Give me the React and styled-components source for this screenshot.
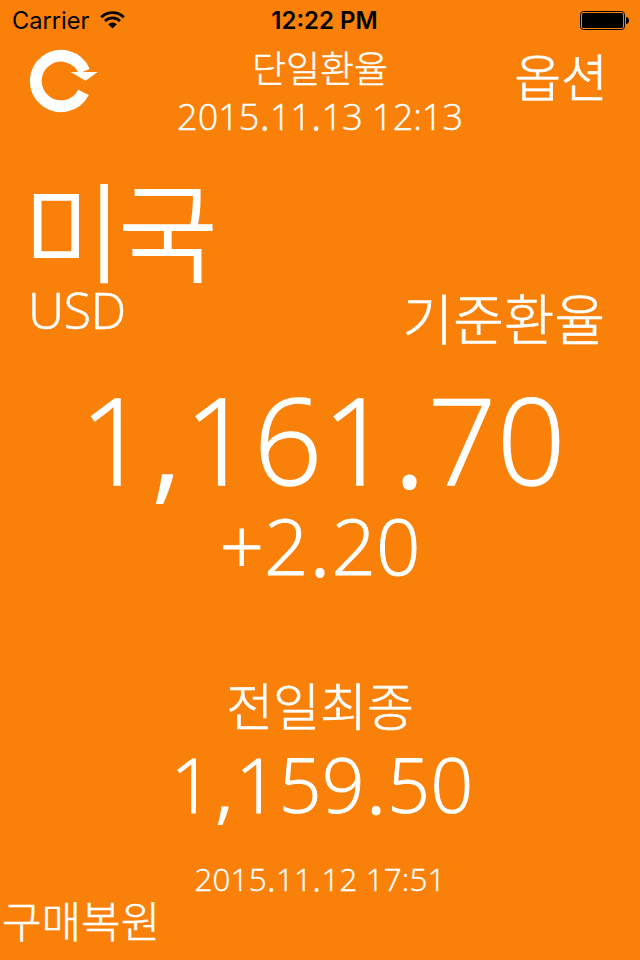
import styled, { createGlobalStyle } from "styled-components";

const GlobalStyle = createGlobalStyle`
  * {
    box-sizing: border-box;
  }
  body {
    margin: 0;
    background: #fa8109;
  }
`;

const Screen = styled.div`
  width: 640px;
  height: 960px;
  overflow: hidden;
  background: #fa8109;
  color: #fff;
  font-family: "Open Sans", "Noto Sans CJK KR", sans-serif;
  font-weight: 300;
  display: flex;
  flex-direction: column;
`;

const StatusBar = styled.div`
  height: 40px;
  padding: 0 11px 0 12px;
  display: grid;
  grid-template-columns: 1fr auto 1fr;
  align-items: center;
  color: #000;
  font-family: Inter, "Liberation Sans", sans-serif;
  font-size: 24px;
  font-weight: 400;
`;

const Carrier = styled.div`
  display: flex;
  align-items: center;
  gap: 11px;
  font-size: 23.6px;
`;

const Clock = styled.div`
  padding-left: 8px;
  font-weight: 600;
`;

const BatteryWrap = styled.div`
  display: flex;
  justify-content: flex-end;
`;

const Text = styled.div`
  font-size: ${(props) => props.$size}px;
  line-height: 1;
  letter-spacing: ${(props) => props.$spacing || 0}px;
  -webkit-text-stroke: ${(props) => props.$stroke || 0.012}em #fff;
  white-space: pre;
`;

const Mark = styled.span`
  padding: 0 0.016em;
  font-weight: 400;
  line-height: 0;
  vertical-align: -0.025em;
  -webkit-text-stroke-width: 0;
`;

const Header = styled.header`
  height: 137px;
  padding: 9px 32px 0 28px;
  display: grid;
  grid-template-columns: 1fr auto 1fr;
`;

const RefreshButton = styled.button`
  width: 72px;
  height: 64px;
  padding: 0;
  border: 0;
  background: none;
`;

const HeaderTitle = styled.div`
  padding: 1px 0 0 4px;
  display: flex;
  flex-direction: column;
  align-items: center;
  gap: 12px;
`;

const OptionButton = styled.div`
  padding-top: 3px;
  display: flex;
  justify-content: flex-end;
`;

const Country = styled.section`
  height: 200px;
  padding: 2px 35px 0 28px;
`;

const CountryName = styled.div`
  height: 106px;
  margin-left: -5px;
`;

const CodeRow = styled.div`
  display: flex;
  justify-content: space-between;
`;

const RateLabel = styled.div`
  padding-top: 6px;
`;

const Rate = styled.section`
  height: 304px;
  padding-top: 2px;
  display: flex;
  flex-direction: column;
  align-items: center;
  gap: 7px;
`;

const RateValue = styled.div`
  padding-left: 6px;
`;

const Previous = styled.section`
  height: 219px;
  display: flex;
  flex-direction: column;
  align-items: center;
`;

const PreviousRate = styled.div`
  margin: 15px 0 42px;
  padding-left: 4px;
`;

const Restore = styled.div`
  padding-left: 2px;
`;

const WifiIcon = () => (
  <svg width="25" height="18" viewBox="0 0 25 18">
    <g fill="none" stroke="#000" strokeWidth="2.8">
      <path d="M1.2 6.2a16 16 0 0 1 22.6 0" />
      <path d="M5 10a10.6 10.6 0 0 1 15 0" />
    </g>
    <path d="M8.2 13.2a6.1 6.1 0 0 1 8.6 0L12.5 17.6z" />
  </svg>
);

const BatteryIcon = () => (
  <svg width="49" height="19" viewBox="0 0 49 19">
    <rect x="0.5" y="0.5" width="44" height="18" rx="3" fill="none" stroke="#000" />
    <rect x="2" y="2" width="41" height="15" rx="1.5" />
    <path d="M46 6c4 0 4 7 0 7z" />
  </svg>
);

const RefreshIcon = () => (
  <svg width="72" height="64" viewBox="0 0 72 64" display="block">
    <path
      d="M55.5 43.3A25.2 25.2 0 1 1 56.2 22.2"
      fill="none"
      stroke="#fff"
      strokeWidth="11.8"
    />
    <path d="M42.6 23H69.6L57.6 31.8z" fill="#fff" />
  </svg>
);

const Amount = ({ value, size, spacing }) => (
  <Text $size={size} $spacing={spacing}>
    {value.split("").map((c, i) =>
      c === "," || c === "." ? <Mark key={i}>{c}</Mark> : c
    )}
  </Text>
);

export default function App() {
  return (
    <>
      <GlobalStyle />
      <Screen>
        <StatusBar>
          <Carrier>
            Carrier
            <WifiIcon />
          </Carrier>
          <Clock>12:22 PM</Clock>
          <BatteryWrap>
            <BatteryIcon />
          </BatteryWrap>
        </StatusBar>

        <Header>
          <RefreshButton aria-label="refresh">
            <RefreshIcon />
          </RefreshButton>
          <HeaderTitle>
            <Text $size={37}>단일환율</Text>
            <Amount value="2015.11.13 12:13" size={36} />
          </HeaderTitle>
          <OptionButton>
            <Text $size={51}>옵션</Text>
          </OptionButton>
        </Header>

        <Country>
          <CountryName>
            <Text $size={108} $spacing={-4} $stroke={0.018}>
              미국
            </Text>
          </CountryName>
          <CodeRow>
            <Text $size={50} $spacing={-0.3}>
              USD
            </Text>
            <RateLabel>
              <Text $size={55}>기준환율</Text>
            </RateLabel>
          </CodeRow>
        </Country>

        <Rate>
          <RateValue>
            <Amount value="1,161.70" size={120} spacing={0.6} />
          </RateValue>
          <Amount value="+2.20" size={78} />
        </Rate>

        <Previous>
          <Text $size={51}>전일최종</Text>
          <PreviousRate>
            <Amount value="1,159.50" size={75} spacing={0.3} />
          </PreviousRate>
          <Amount value="2015.11.12 17:51" size={31.3} spacing={0.15} />
        </Previous>

        <Restore>
          <Text $size={43}>구매복원</Text>
        </Restore>
      </Screen>
    </>
  );
}
